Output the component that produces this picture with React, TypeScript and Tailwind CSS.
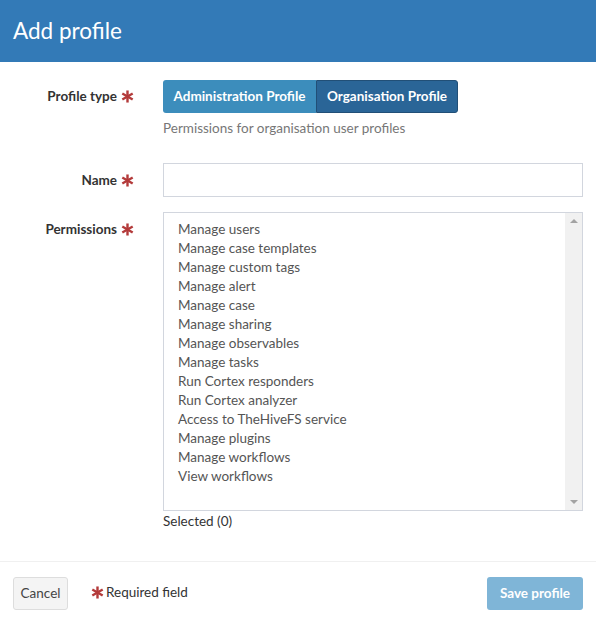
const permissions = [
  "Manage users",
  "Manage case templates",
  "Manage custom tags",
  "Manage alert",
  "Manage case",
  "Manage sharing",
  "Manage observables",
  "Manage tasks",
  "Run Cortex responders",
  "Run Cortex analyzer",
  "Access to TheHiveFS service",
  "Manage plugins",
  "Manage workflows",
  "View workflows",
]

const Star = ({ className = "" }: { className?: string }) => (
  <svg viewBox="0 0 14 14" className={`w-[13px] h-[13px] ${className}`}>
    <g stroke="#b33a3a" strokeWidth="2.6" strokeLinecap="butt">
      <line x1="7" y1="0.5" x2="7" y2="13.5" />
      <line x1="1.4" y1="3.75" x2="12.6" y2="10.25" />
      <line x1="1.4" y1="10.25" x2="12.6" y2="3.75" />
    </g>
  </svg>
)

const Label = ({ text }: { text: string }) => (
  <div className="w-[134px] shrink-0 flex items-center justify-end gap-[4px] font-bold text-[#333]">
    <span>{text}</span>
    <Star />
  </div>
)

export default function App() {
  return (
    <div className="w-[596px] h-[623px] bg-white flex flex-col text-[13.5px] font-['Lato',sans-serif]">
      <div className="h-[62px] bg-[#337ab7] flex items-center px-[13px]">
        <h1 className="text-white text-[22.5px] leading-none">Add profile</h1>
      </div>

      <div className="flex-1 pt-[18px] pr-[13px]">
        {/* Profile type */}
        <div className="flex gap-[29px]">
          <div className="h-[33px] flex items-center">
            <Label text="Profile type" />
          </div>
          <div>
            <div className="flex h-[33px] text-white font-bold">
              <div className="w-[153px] bg-[#3c8dbc] rounded-l-[3px] flex items-center justify-center">
                Administration Profile
              </div>
              <div className="w-[142px] bg-[#2a6597] border border-[#214f77] rounded-r-[3px] flex items-center justify-center">
                Organisation Profile
              </div>
            </div>
            <p className="text-[#777] mt-[6px] leading-[19px]">Permissions for organisation user profiles</p>
          </div>
        </div>

        {/* Name */}
        <div className="flex gap-[29px] mt-[25px]">
          <div className="h-[34px] flex items-center">
            <Label text="Name" />
          </div>
          <div className="flex-1 h-[34px] border border-[#d2d6de]" />
        </div>

        {/* Permissions */}
        <div className="flex gap-[29px] mt-[15px]">
          <div className="h-[34px] flex items-center">
            <Label text="Permissions" />
          </div>
          <div className="flex-1">
            <div className="h-[299px] border border-[#d2d6de] flex">
              <ul className="flex-1 pt-[7px] pl-[14px] text-[#555] leading-[19px]">
                {permissions.map((p) => (
                  <li key={p}>{p}</li>
                ))}
              </ul>
              <div className="w-[17px] bg-[#f1f1f1] flex flex-col justify-between items-center py-[6px]">
                <div className="w-0 h-0 border-l-[4px] border-r-[4px] border-b-[4px] border-l-transparent border-r-transparent border-b-[#a3a3a3]" />
                <div className="w-0 h-0 border-l-[4px] border-r-[4px] border-t-[4px] border-l-transparent border-r-transparent border-t-[#a3a3a3]" />
              </div>
            </div>
            <div className="text-[#333] leading-[20px]">Selected (0)</div>
          </div>
        </div>
      </div>

      <div className="border-t border-[#f0f0f0] px-[13px] pt-[15px] pb-[13px] flex items-start justify-between">
        <div className="flex items-start gap-[23px]">
          <div className="h-[33px] w-[55px] bg-[#f4f4f4] border border-[#ddd] rounded-[3px] flex items-center justify-center text-[#444]">
            Cancel
          </div>
          <div className="flex items-center gap-[2px] h-[31px] text-[#333]">
            <Star />
            <span>Required field</span>
          </div>
        </div>
        <div className="h-[33px] w-[96px] bg-[#7fb5d7] rounded-[3px] flex items-center justify-center text-white font-bold">
          Save profile
        </div>
      </div>
    </div>
  )
}
